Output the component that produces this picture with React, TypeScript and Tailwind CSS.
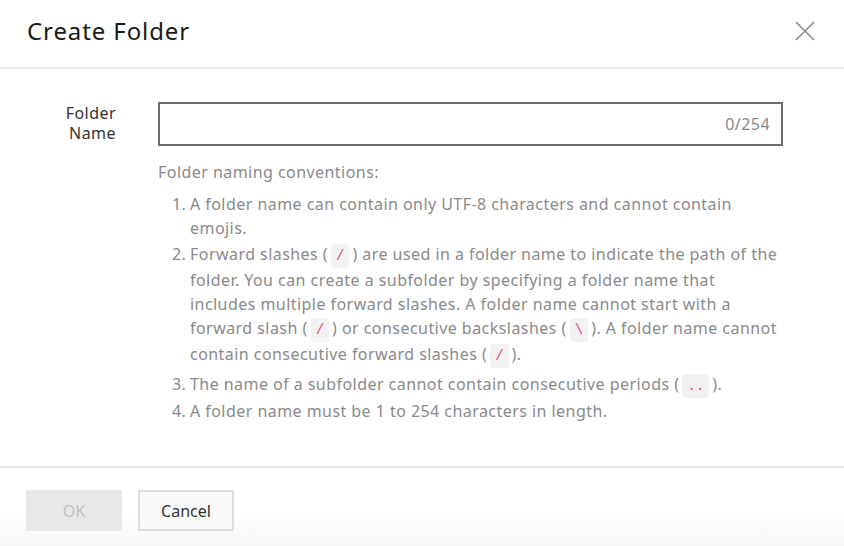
import React from "react";

const font = { fontFamily: '"Noto Sans", "Liberation Sans", Arial, sans-serif' };

function Chip({ children }: { children: React.ReactNode }) {
  return (
    <span className="mx-[3px] inline-block rounded-[3px] bg-[#f2f2f2] px-[5px] py-[2px] font-mono text-[14px] leading-[20px] tracking-normal text-[#e8456a]">
      {children}
    </span>
  );
}

export default function App() {
  return (
    <div className="relative flex h-[546px] w-[844px] flex-col overflow-hidden bg-white" style={font}>
      <div className="flex h-[69px] items-center justify-between border-b-2 border-[#e8e8e8] pb-[6px] pl-[27px] pr-[28px]">
        <h2 className="text-[24px] font-normal tracking-[0.9px] text-[#1a1a1a]">Create Folder</h2>
        <svg width="22" height="22" viewBox="0 0 22 22" className="text-[#8a8a8a]">
          <path d="M2 2L20 20M20 2L2 20" stroke="currentColor" strokeWidth="1.6" fill="none" />
        </svg>
      </div>

      <div className="flex flex-1 pt-[33px] tracking-[0.45px]">
        <div className="w-[116px] pt-[1px] text-right text-[16px] leading-[20px] text-[#333]">
          Folder
          <br />
          Name
        </div>
        <div className="ml-[42px] w-[625px]">
          <div className="flex h-[44px] items-center justify-end border-2 border-[#6e6e6e] px-[11px] text-[16px] text-[#888]">
            0/254
          </div>
          <p className="mt-[14px] text-[16px] leading-[24px] text-[#8a8a8a]">Folder naming conventions:</p>
          <ol className="mt-[8px] pl-[14px] text-[16px] leading-[24px] text-[#8a8a8a]">
            <li className="mb-[2px] flex">
              <span className="w-[18px] shrink-0">1.</span>
              <span>
                A folder name can contain only UTF-8 characters and cannot contain
                <br />
                emojis.
              </span>
            </li>
            <li className="mb-[4px] flex">
              <span className="w-[18px] shrink-0">2.</span>
              <span>
                Forward slashes (<Chip>/</Chip>) are used in a folder name to indicate the path of the
                <br />
                folder. You can create a subfolder by specifying a folder name that
                <br />
                includes multiple forward slashes. A folder name cannot start with a
                <br />
                forward slash (<Chip>/</Chip>) or consecutive backslashes (<Chip>\</Chip>). A folder name cannot
                <br />
                contain consecutive forward slashes (<Chip>/</Chip>).
              </span>
            </li>
            <li className="mb-[1px] flex">
              <span className="w-[18px] shrink-0">3.</span>
              <span>
                The name of a subfolder cannot contain consecutive periods (<Chip>..</Chip>).
              </span>
            </li>
            <li className="flex">
              <span className="w-[18px] shrink-0">4.</span>
              <span>A folder name must be 1 to 254 characters in length.</span>
            </li>
          </ol>
        </div>
      </div>

      <div className="flex h-[80px] gap-[16px] border-t-2 border-[#e8e8e8] bg-gradient-to-b from-white from-60% to-[#f6f6f6] pl-[26px] pt-[22px]">
        <button className="h-[41px] w-[96px] bg-[#e8e8e8] text-[16px] text-[#c0c0c0]">OK</button>
        <button className="h-[41px] w-[96px] border-2 border-[#dddddd] bg-[#fafafa] text-[16px] text-[#333]">
          Cancel
        </button>
      </div>
    </div>
  );
}
